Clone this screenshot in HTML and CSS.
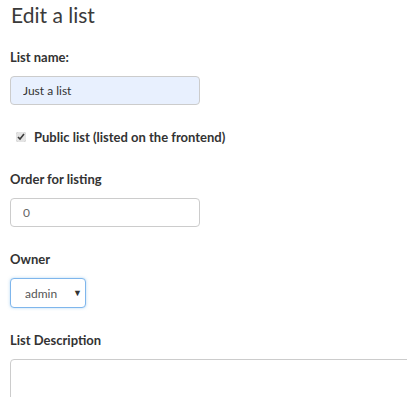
FILE: index.html
```html
<!DOCTYPE html>
<html lang="en">
<head>
    <meta charset="UTF-8">
    <meta name="viewport" content="width=device-width, initial-scale=1.0">
    <title>Edit a list</title>
    <link rel="stylesheet" href="styles.css">
</head>
<body>

<div class="container">
    <h1>Edit a list</h1>

    <div class="form-group">
        <label for="list_name">List name:</label>
        <input type="text" id="list_name" class="autofilled" value="Just a list">
    </div>

    <div class="form-group check-group">
        <input type="checkbox" id="public" checked>
        <label for="public">Public list (listed on the frontend)</label>
    </div>

    <div class="form-group">
        <label for="order">Order for listing</label>
        <input type="text" id="order" value="0">
    </div>

    <div class="form-group">
        <label for="owner">Owner</label>
        <div class="select-wrap">
            <select id="owner">
                <option>admin</option>
            </select>
        </div>
    </div>

    <div class="form-group">
        <label for="description">List Description</label>
        <textarea id="description"></textarea>
    </div>
</div>

</body>
</html>
```

FILE: styles.css
```css
html, body {
    overflow: hidden;
    height: 100%;
}
body {
    font-family: "Lato", "Open Sans", sans-serif;
    margin: 0;
    padding: 0;
    background-color: #fff;
    color: #333;
}
.container {
    padding: 0 0 0 10px;
    height: 100%;
    overflow: hidden;
}
h1 {
    font-size: 21px;
    font-weight: 400;
    margin: 4px 0 23px 1px;
    line-height: 22px;
    color: #3a3a3a;
}
.form-group {
    margin-bottom: 24px;
}
label {
    display: block;
    font-size: 13px;
    font-weight: bold;
    margin-bottom: 11px;
}
input[type="text"],
textarea {
    box-sizing: border-box;
    width: 190px;
    height: 29px;
    padding: 4px 12px;
    border: 1px solid #ccc;
    border-radius: 4px;
    font-family: inherit;
    font-size: 12px;
    color: #333;
    background-color: #fff;
}
input.autofilled {
    background-color: #e8f0fe;
}
#order {
    color: #666;
}
.check-group {
    display: flex;
    align-items: center;
    margin: 24px 0 26px;
}
.check-group input {
    width: 10px;
    height: 10px;
    margin: 0 8px 0 6px;
    accent-color: #e4e4e4;
}
.check-group label {
    margin: 0;
}
.select-wrap {
    position: relative;
    display: inline-block;
}
.select-wrap::after {
    content: "\25BC";
    position: absolute;
    right: 4px;
    top: 9px;
    font-size: 9px;
    color: #333;
    pointer-events: none;
}
select {
    appearance: none;
    -webkit-appearance: none;
    box-sizing: border-box;
    width: 76px;
    height: 30px;
    padding: 0 14px;
    border: 1px solid #7fb6ec;
    border-radius: 4px;
    box-shadow: 0 0 3px rgba(102, 175, 233, 0.5);
    background-color: #fff;
    font-family: inherit;
    font-size: 12px;
    color: #555;
}
textarea {
    width: 420px;
    height: 80px;
    resize: none;
}
```
